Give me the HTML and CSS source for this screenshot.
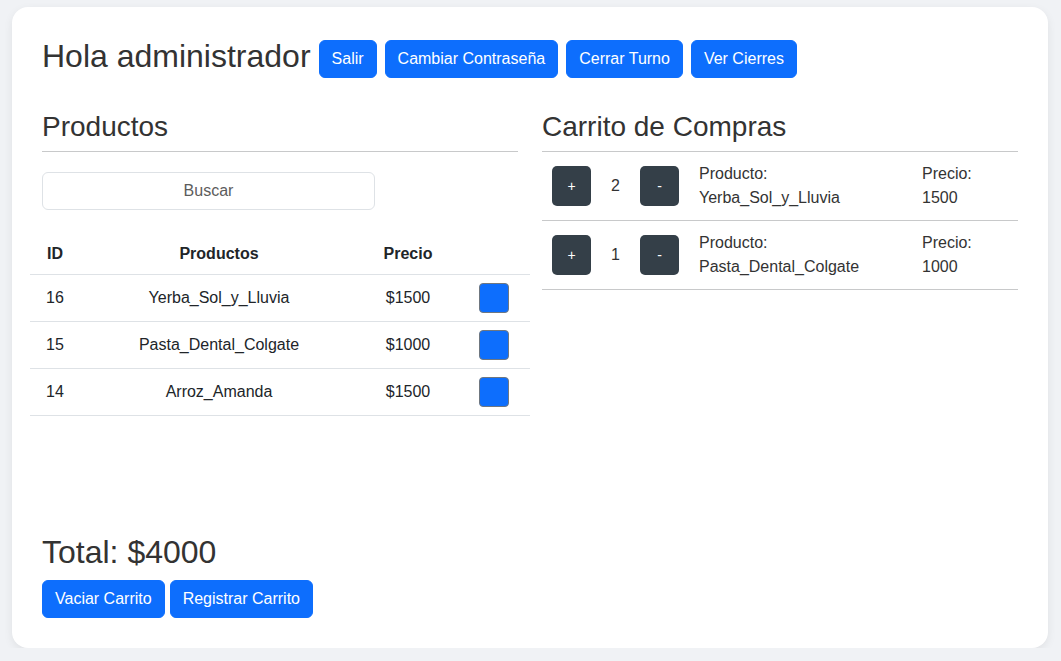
FILE: index.html
```html
<!DOCTYPE html>
<html lang="es">
<head>
<meta charset="utf-8">
<title>Caja</title>
<link rel="stylesheet" href="styles.css">
</head>
<body>
<div class="card">
  <div class="header">
    <h1 class="title">Hola administrador</h1>
    <button class="btn btn-primary btn-top">Salir</button>
    <button class="btn btn-primary btn-top">Cambiar Contraseña</button>
    <button class="btn btn-primary btn-top">Cerrar Turno</button>
    <button class="btn btn-primary btn-top">Ver Cierres</button>
  </div>

  <div class="columns">
    <section class="col">
      <h2 class="section-title">Productos</h2>
      <hr class="rule">
      <input class="search" type="text" placeholder="Buscar">
      <table class="products">
        <thead>
          <tr><th class="c-id">ID</th><th class="c-name">Productos</th><th class="c-price">Precio</th><th class="c-act"></th></tr>
        </thead>
        <tbody>
          <tr><td>16</td><td>Yerba_Sol_y_Lluvia</td><td>$1500</td><td><button class="add"></button></td></tr>
          <tr><td>15</td><td>Pasta_Dental_Colgate</td><td>$1000</td><td><button class="add"></button></td></tr>
          <tr><td>14</td><td>Arroz_Amanda</td><td>$1500</td><td><button class="add"></button></td></tr>
        </tbody>
      </table>
    </section>

    <section class="col">
      <h2 class="section-title">Carrito de Compras</h2>
      <hr class="rule">
      <div class="cart">
        <div class="item">
          <button class="btn-dark">+</button>
          <span class="qty">2</span>
          <button class="btn-dark">-</button>
          <div class="info prod"><div>Producto:</div><div>Yerba_Sol_y_Lluvia</div></div>
          <div class="info"><div>Precio:</div><div>1500</div></div>
        </div>
        <div class="item">
          <button class="btn-dark">+</button>
          <span class="qty">1</span>
          <button class="btn-dark">-</button>
          <div class="info prod"><div>Producto:</div><div>Pasta_Dental_Colgate</div></div>
          <div class="info"><div>Precio:</div><div>1000</div></div>
        </div>
      </div>
    </section>
  </div>

  <div class="footer">
    <h1 class="total">Total: $4000</h1>
    <div class="actions">
      <button class="btn btn-primary">Vaciar Carrito</button>
      <button class="btn btn-primary">Registrar Carrito</button>
    </div>
  </div>
</div>
</body>
</html>
```

FILE: styles.css
```css
* { box-sizing: border-box; }

body {
  margin: 0;
  background: #f0f2f5;
  font-family: "Liberation Sans", Arial, sans-serif;
  color: #212529;
  font-size: 16px;
}

.card {
  margin: 7px 0 0 12px;
  width: 1036px;
  height: 641px;
  background: #fff;
  border-radius: 16px;
  box-shadow: 0 3px 10px rgba(0, 0, 0, 0.07);
  padding: 30px;
  display: flex;
  flex-direction: column;
}

.header {
  display: flex;
  align-items: flex-start;
  gap: 8px;
}

.title, .total {
  margin: 0;
  font-size: 32px;
  font-weight: 400;
  line-height: 38px;
  color: #333;
}

.btn {
  font-family: inherit;
  font-size: 16px;
  line-height: 24px;
  padding: 6px 12px;
  border: 1px solid transparent;
  border-radius: 6px;
  cursor: pointer;
}

.btn-primary {
  background: #0d6efd;
  border-color: #0d6efd;
  color: #fff;
}

.btn-top { margin-top: 3px; }

.columns {
  margin-top: 32px;
  display: grid;
  grid-template-columns: 1fr 1fr;
  gap: 24px;
}

.section-title {
  margin: 0;
  font-size: 28px;
  font-weight: 400;
  line-height: 34px;
  color: #333;
}

.rule {
  margin: 7px 0 0;
  border: 0;
  border-top: 1px solid #c8c9ca;
}

.search {
  display: block;
  margin-top: 20px;
  width: 333px;
  height: 38px;
  border: 1px solid #dee2e6;
  border-radius: 6px;
  font-family: inherit;
  font-size: 16px;
  text-align: center;
  color: #212529;
  padding: 6px 12px;
}

.search::placeholder { color: #5c5c5c; }

.products {
  margin: 24px -12px 0;
  width: 500px;
  border-collapse: collapse;
  table-layout: fixed;
}

.products th, .products td {
  text-align: center;
  vertical-align: middle;
  padding: 8px;
  line-height: 24px;
  border-bottom: 1px solid #dee2e6;
  color: #212529;
}

.products th { font-weight: 700; }

.c-id { width: 50px; }
.c-name { width: 278px; }
.c-price { width: 100px; }
.c-act { width: 72px; }

.add {
  display: block;
  margin: 0 auto;
  width: 30px;
  height: 30px;
  background: #0d6efd;
  border: 1px solid #6f7780;
  border-radius: 4px;
  padding: 0;
}

.cart { color: #333; }

.item {
  display: flex;
  align-items: center;
  padding: 10px 10px;
  border-bottom: 1px solid #c8c9ca;
}

.btn-dark {
  width: 39px;
  height: 40px;
  background: #343f48;
  border: 0;
  border-radius: 5px;
  color: #fff;
  font-family: inherit;
  font-size: 14px;
  padding: 0;
}

.qty {
  width: 49px;
  text-align: center;
  line-height: 24px;
}

.info { line-height: 24px; }

.prod {
  margin-left: 20px;
  width: 223px;
}

.footer { margin-top: auto; }

.actions {
  margin-top: 9px;
  display: flex;
  gap: 5px;
}
```
